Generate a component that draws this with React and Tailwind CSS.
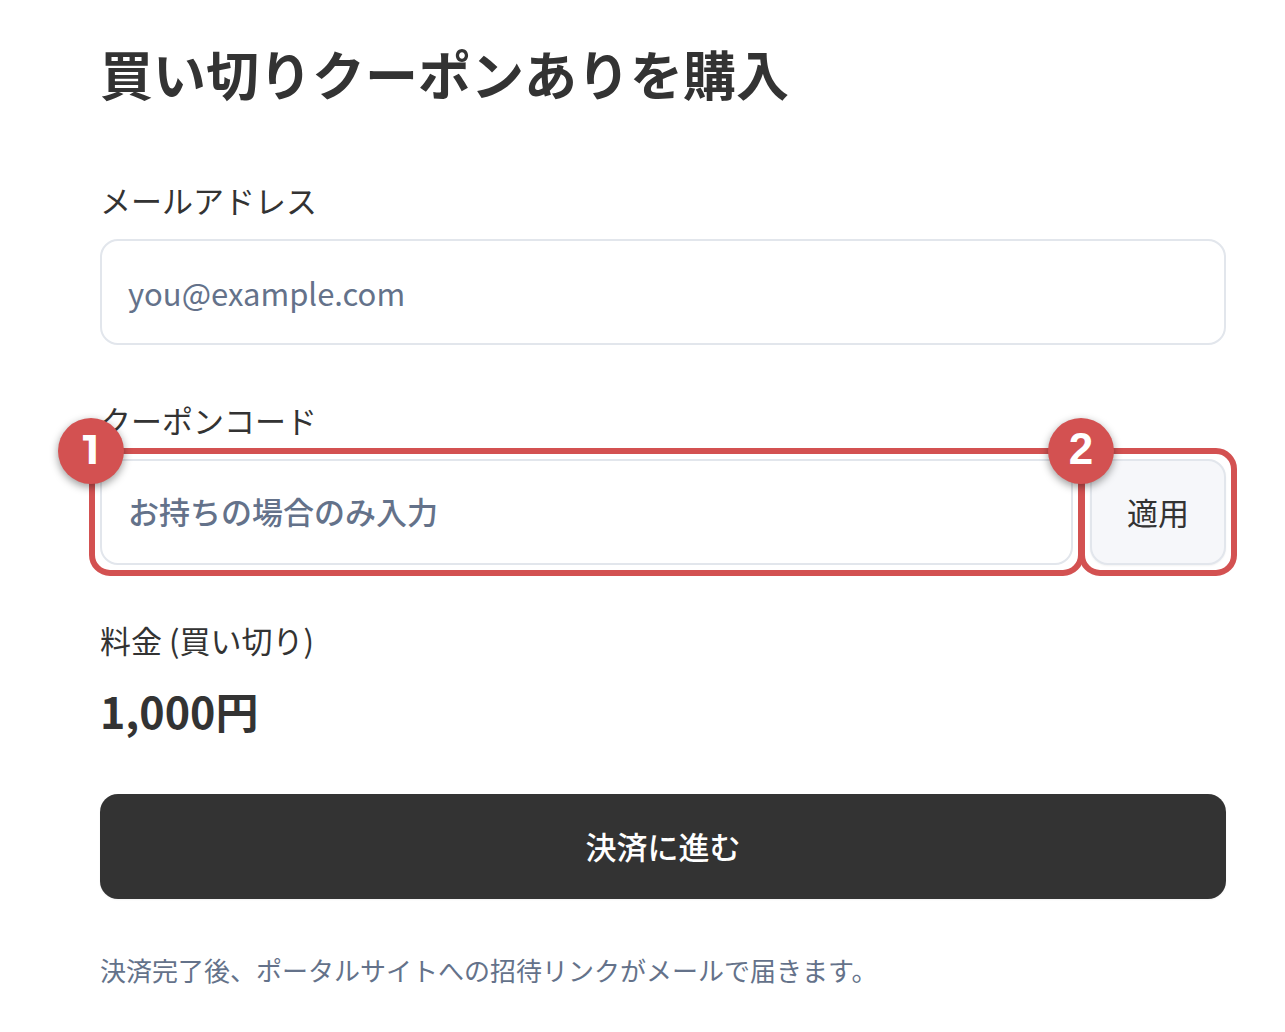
function Callout({ number, className }) {
  return (
    <span className="pointer-events-none absolute -inset-[11px] rounded-[21px] border-[6px] border-[#d35151]">
      <span className={`absolute -left-[37px] -top-[36px] flex size-[66px] items-center justify-center rounded-full bg-[#d35151] pb-1 font-bold leading-none text-white shadow-[0_3px_9px_rgba(0,0,0,0.4)] ${className}`}>
        {number}
      </span>
    </span>
  );
}

export default function App() {
  return (
    <main className="min-h-screen bg-white pt-[37px] pr-[59px] pb-10 pl-[100px] font-['Noto_Sans_CJK_JP',sans-serif] text-[#333333]">
      <h1 className="text-[53px] font-bold leading-[72px]">買い切りクーポンありを購入</h1>
      <form className="mt-[69px]" onSubmit={(e) => e.preventDefault()}>
        <label htmlFor="email" className="block text-[31px] leading-[44px]">メールアドレス</label>
        <input
          id="email"
          type="email"
          placeholder="you@example.com"
          className="mt-[17px] block h-[106px] w-full rounded-[18px] border-2 border-[#e2e6ec] bg-white px-[26px] text-[31px] placeholder:text-[#64728a] placeholder:opacity-100"
        />
        <label htmlFor="coupon" className="mt-[53px] block text-[31px] leading-[44px]">クーポンコード</label>
        <div className="mt-[17px] flex gap-[17px]">
          <div className="relative flex-1">
            <input
              id="coupon"
              type="text"
              placeholder="お持ちの場合のみ入力"
              className="block h-[106px] w-full rounded-[18px] border-2 border-[#e2e6ec] bg-white px-[26px] pb-1 text-[31px] font-medium placeholder:text-[#64728a] placeholder:opacity-100"
            />
            <Callout number="1" className="font-['Montserrat','Inter',sans-serif] text-[42px]" />
          </div>
          <div className="relative">
            <button type="button" className="block h-[106px] w-[136px] rounded-[18px] border-2 border-[#e2e6ec] bg-[#f6f7fa] text-[31px] shadow-xs">
              適用
            </button>
            <Callout number="2" className="font-['Liberation_Sans',sans-serif] text-[44px]" />
          </div>
        </div>
        <p className="mt-[53px] text-[31px] leading-[44px]">料金 (買い切り)</p>
        <p className="mt-4 text-[43px] font-bold leading-[64px]">1,000円</p>
        <button type="submit" className="mt-[52px] block h-[105px] w-full rounded-[18px] bg-[#333333] text-[31px] font-medium text-white shadow-xs">
          決済に進む
        </button>
      </form>
      <p className="mt-[51px] text-[26px] leading-[40px] text-[#64728a]">決済完了後、ポータルサイトへの招待リンクがメールで届きます。</p>
    </main>
  );
}
